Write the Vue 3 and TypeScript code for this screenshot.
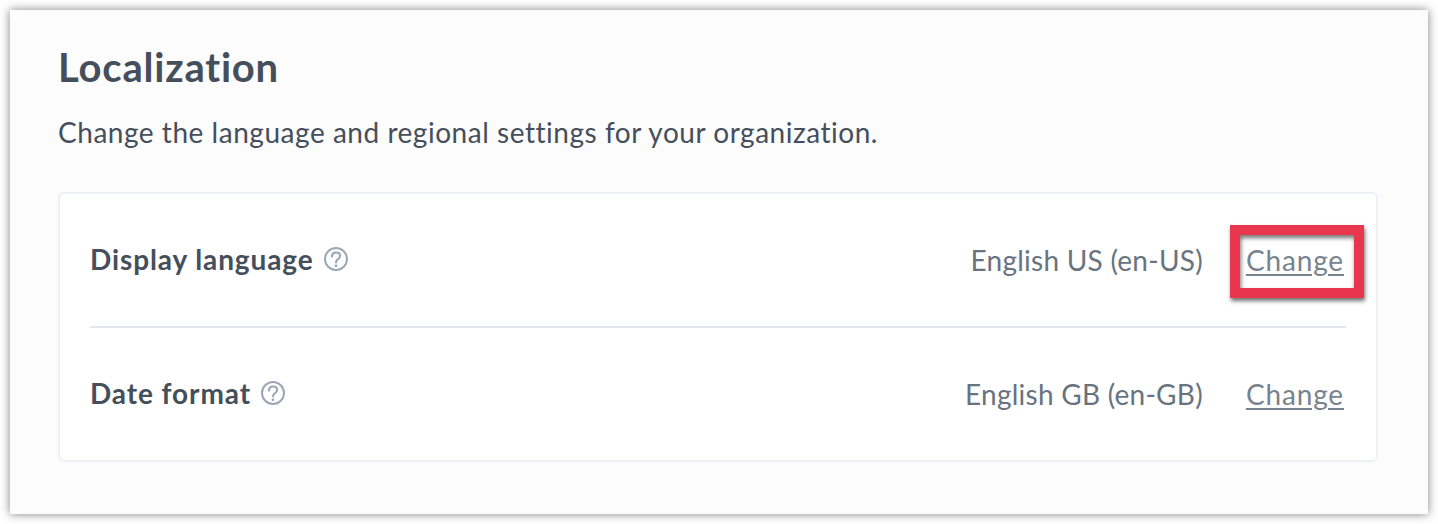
<script setup lang="ts">
interface Row { label: string; value: string; marked: boolean }
const rows: Row[] = [
  { label: 'Display language', value: 'English US (en-US)', marked: true },
  { label: 'Date format', value: 'English GB (en-GB)', marked: false },
]
</script>

<template>
  <div class="page">
    <section class="panel">
      <h1 class="title">Localization</h1>
      <p class="intro">Change the language and regional settings for your organization.</p>
      <div class="card">
        <div v-for="row in rows" :key="row.label" class="row">
          <div class="label">
            <span>{{ row.label }}</span>
            <svg class="help" viewBox="0 0 24 24" width="24" height="24" fill="none" stroke="#9aa7b4">
              <circle cx="12" cy="12" r="11" stroke-width="2" />
              <path d="M8 9.4c0-2.4 1.8-3.9 4.1-3.9s4 1.4 4 3.4c0 1.6-.9 2.4-2.1 3.2-1.2.7-1.9 1.3-1.9 2.8v.5" stroke-width="2.1" stroke-linecap="round" />
              <circle cx="12" cy="18.8" r="1.4" fill="#9aa7b4" stroke="none" />
            </svg>
          </div>
          <div class="value">{{ row.value }}</div>
          <a class="change" :class="{ marked: row.marked }">Change</a>
        </div>
      </div>
    </section>
  </div>
</template>

<style scoped>
.page {
  box-sizing: border-box;
  width: 1438px;
  height: 524px;
  padding: 10px;
  background: #fff;
  font-family: Lato, "Open Sans", sans-serif;
  font-variant-ligatures: none;
}
.panel {
  box-sizing: border-box;
  height: 504px;
  padding: 34px 50px 0 48px;
  background: #fcfcfd;
  box-shadow: 0 0 9px rgba(0, 0, 0, 0.5);
}
.title {
  margin: 0;
  font-size: 40px;
  line-height: 46px;
  font-weight: 700;
  letter-spacing: 0.8px;
  color: #454f5b;
}
.intro {
  margin: 25px 0 0;
  font-size: 28px;
  line-height: 34px;
  font-weight: 400;
  letter-spacing: 0.53px;
  color: #454f5b;
}
.card {
  box-sizing: border-box;
  height: 270px;
  margin-top: 43px;
  padding: 0 30px;
  background: #fff;
  border: 2px solid #edf0f4;
  border-radius: 6px;
}
.row {
  box-sizing: border-box;
  display: flex;
  align-items: center;
  height: 132px;
}
.row + .row {
  height: 134px;
  border-top: 2px solid #e2e6ee;
}
.label {
  display: flex;
  align-items: center;
  gap: 10px;
  margin-bottom: 2px;
  font-size: 28px;
  font-weight: 700;
  letter-spacing: 0.9px;
  color: #454f5b;
}
.help {
  flex: none;
}
.value {
  margin-left: auto;
  font-size: 28px;
  letter-spacing: 0.25px;
  color: #68737f;
}
.change {
  position: relative;
  margin: 0 2px 0 43px;
  font-size: 28px;
  line-height: 34px;
  letter-spacing: 0.85px;
  color: #77838f;
  text-decoration: underline;
  text-underline-offset: 3px;
}
.marked::after {
  content: "";
  position: absolute;
  left: -16px;
  right: -20px;
  top: -18px;
  bottom: -21px;
  border: 10px solid #e8364f;
  box-shadow: 1px 3px 4px rgba(0, 0, 0, 0.55), inset 1px 3px 4px rgba(0, 0, 0, 0.55);
}
</style>
